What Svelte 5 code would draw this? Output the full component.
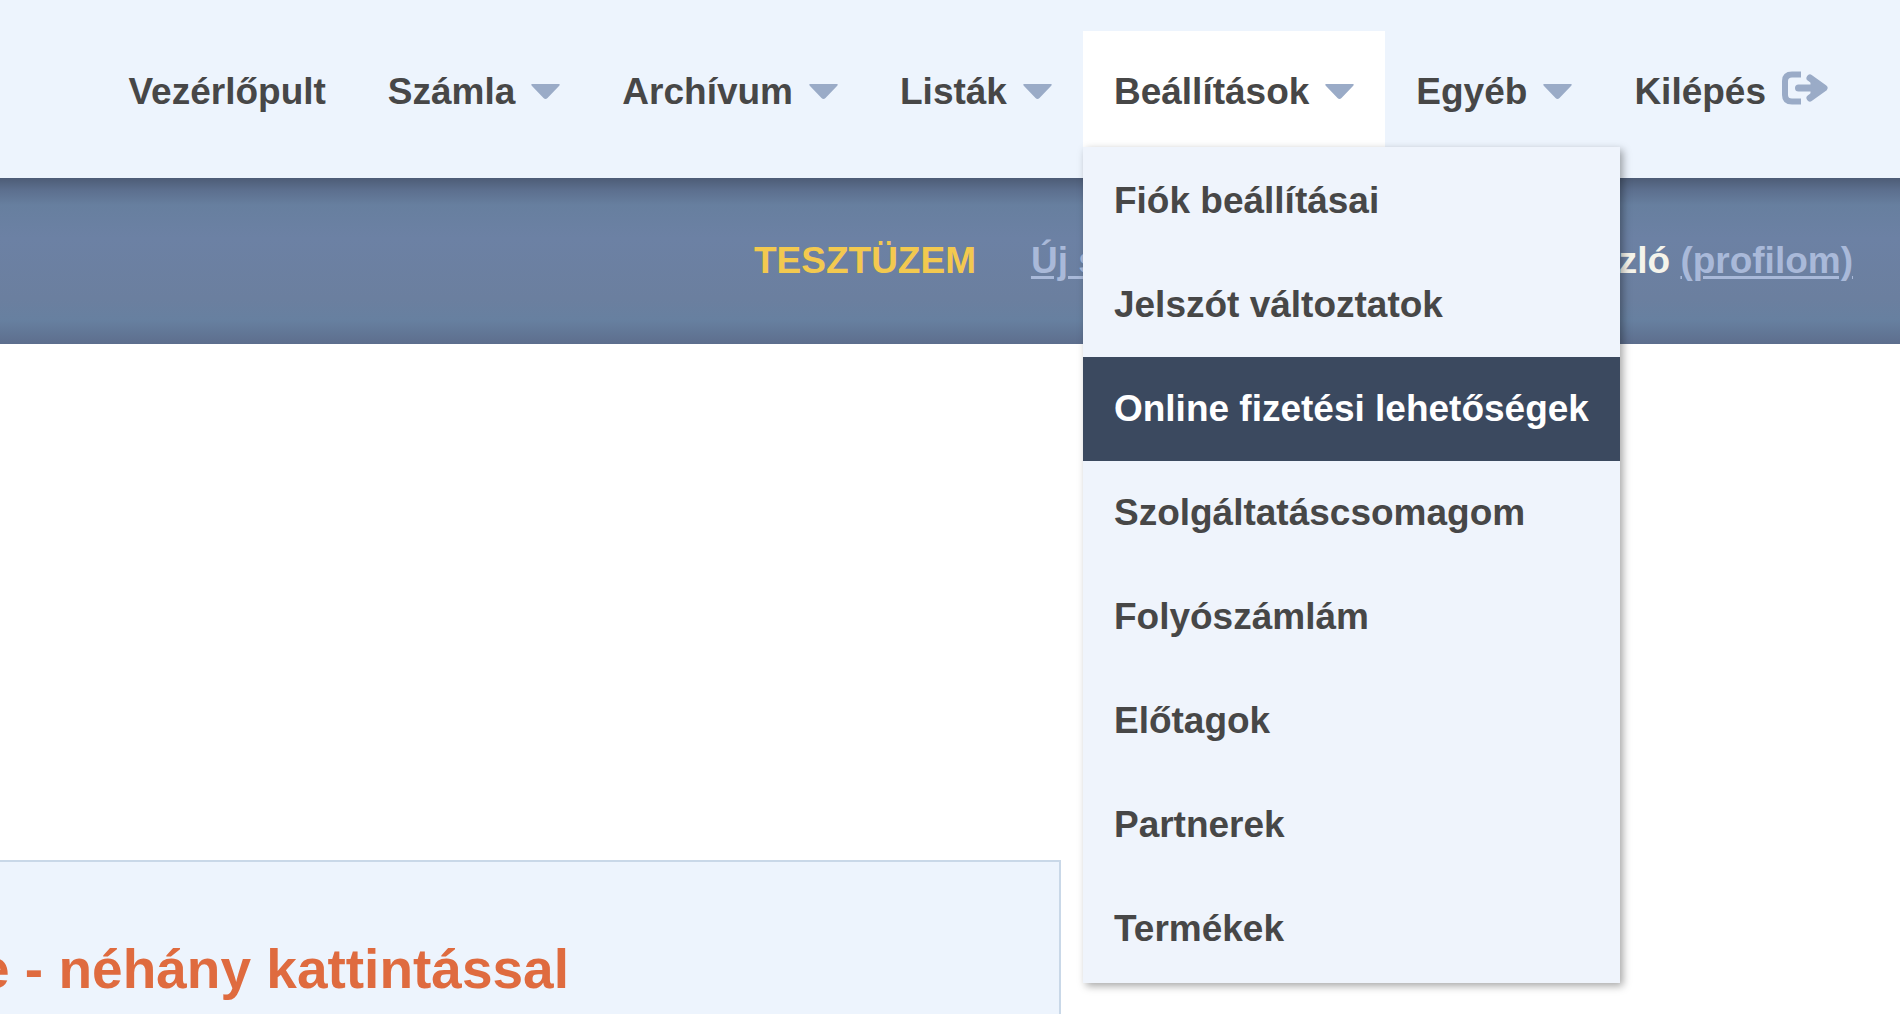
<script lang="ts">
  interface MenuItem {
    label: string;
    children?: string[];
  }

  const menu: MenuItem[] = [
    { label: 'Vezérlőpult' },
    { label: 'Számla', children: [] },
    { label: 'Archívum', children: [] },
    { label: 'Listák', children: [] },
    {
      label: 'Beállítások',
      children: [
        'Fiók beállításai',
        'Jelszót változtatok',
        'Online fizetési lehetőségek',
        'Szolgáltatáscsomagom',
        'Folyószámlám',
        'Előtagok',
        'Partnerek',
        'Termékek'
      ]
    },
    { label: 'Egyéb', children: [] }
  ];

  let open = $state('Beállítások');
  let current = $state('Online fizetési lehetőségek');

  function toggle(label: string) {
    open = open === label ? '' : label;
  }
</script>

<svelte:head>
  <title>Beállítások</title>
</svelte:head>

<div class="page">
  <header>
    <nav>
      <ul class="menu">
        {#each menu as item}
          <li>
            {#if item.children}
              <button
                class="menu-item"
                class:open={open === item.label}
                aria-expanded={open === item.label}
                onclick={() => toggle(item.label)}
              >
                {item.label}
                <svg class="caret" viewBox="0 0 29 16" aria-hidden="true">
                  <path d="M1 0H28Q29.500 .5 28 2L16.500 14Q14.500 16 12.500 14L1 2Q-.5 .5 1 0Z" />
                </svg>
              </button>
              {#if open === item.label && item.children.length}
                <ul class="dropdown">
                  {#each item.children as child}
                    <li>
                      <a href="#top" class:active={current === child} onclick={() => (current = child)}>{child}</a>
                    </li>
                  {/each}
                </ul>
              {/if}
            {:else}
              <a class="menu-item" href="#top">{item.label}</a>
            {/if}
          </li>
        {/each}
        <li>
          <a class="menu-item" href="#top">
            Kilépés
            <svg class="logout" viewBox="0 0 46 42" aria-hidden="true">
              <path class="line" d="M19 3.500H10Q3 3.500 3 10V24Q3 30.500 10 30.500H19" />
              <path class="shaft" d="M16.500 17H40" />
              <path class="shaft" d="M28 7L42 17L28 27" />
              <path class="fill" d="M29 9L42 17L29 25Z" />
            </svg>
          </a>
        </li>
      </ul>
    </nav>
  </header>

  <div class="status">
    <strong class="mode">TESZTÜZEM</strong>
    <div class="actions"><a href="#top">Új számla</a></div>
    <div class="user">László <a href="#top">(profilom)</a></div>
  </div>

  <main>
    <section class="panel">
      <h2>e - néhány kattintással</h2>
    </section>
  </main>
</div>

<style>
  :global(body) {
    margin: 0;
    background: #fff;
  }

  .page {
    height: 100vh;
    overflow: hidden;
    font-family: 'Liberation Sans', Arial, sans-serif;
    font-size: 37px;
    font-weight: bold;
    line-height: 52px;
    color: #474747;
    white-space: nowrap;
  }

  header {
    padding: 31px 41px 31px 0;
    background: #edf4fd;
  }

  ul {
    margin: 0;
    padding: 0;
    list-style: none;
  }

  .menu {
    display: flex;
    justify-content: flex-end;
  }

  .menu > li {
    position: relative;
  }

  .menu-item {
    display: flex;
    align-items: center;
    gap: 16px;
    padding: 35px 31px 29px;
    border: 0;
    background: none;
    font: inherit;
    color: inherit;
    text-decoration: none;
    cursor: pointer;
  }

  .menu-item.open {
    background: #fff;
  }

  .caret {
    width: 29px;
    height: 16px;
    fill: #9aabc7;
  }

  .logout {
    width: 46px;
    height: 42px;
    fill: none;
    stroke: #9aabc7;
    stroke-linejoin: round;
  }

  .line {
    stroke-width: 6;
  }

  .shaft {
    stroke-width: 7;
    stroke-linecap: round;
  }

  .fill {
    fill: #9aabc7;
  }

  .dropdown {
    position: absolute;
    top: 100%;
    left: 0;
    z-index: 10;
    padding: 2px 0;
    background: #eff4fc;
    box-shadow: 3px 3px 8px rgba(0, 0, 0, 0.35);
  }

  .dropdown a {
    display: block;
    padding: 26px 31px;
    color: inherit;
    text-decoration: none;
  }

  .dropdown a.active {
    background: #3b495f;
    color: #fff;
  }

  .status {
    display: flex;
    justify-content: flex-end;
    padding: 57px 47px;
    background: linear-gradient(#4d5c76, #5c6f8e 12px, #677f9f 27px, #6c81a4 60px, #6b7f9f 120px, #6780a0 142px, #5d6e8d);
  }

  .mode {
    margin-right: 55px;
    color: #f3c94f;
  }

  .actions {
    min-width: 524px;
  }

  .status a {
    color: #a9b9d9;
    text-decoration-thickness: 3px;
    text-underline-offset: 3px;
  }

  .user {
    color: #f5f4eb;
  }

  main {
    padding-top: 516px;
  }

  .panel {
    box-sizing: border-box;
    width: 59%;
    margin-left: -60px;
    padding: 75px 37px;
    border: 2px solid #c9d8e8;
    background: #edf4fd;
  }

  h2 {
    margin: 0;
    font-size: 55px;
    line-height: 64px;
    color: #df6b3f;
  }
</style>
